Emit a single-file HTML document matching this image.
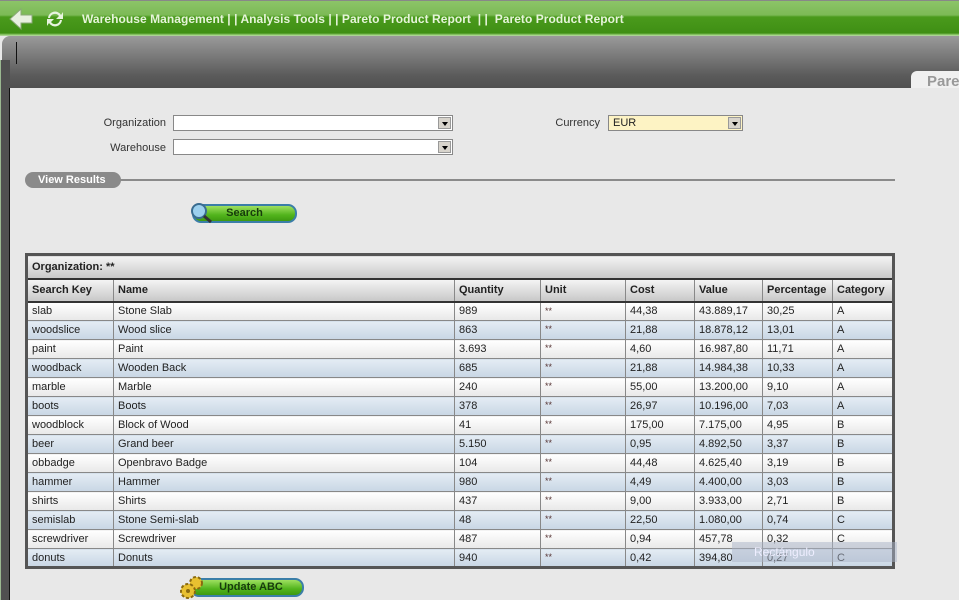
<!DOCTYPE html>
<html><head><meta charset="utf-8"><style>
*{margin:0;padding:0;box-sizing:border-box}
body{width:959px;height:600px;overflow:hidden;background:#e8e8e8;font-family:"Liberation Sans",sans-serif;font-size:11px;color:#222;position:relative}
.top{position:absolute;left:0;top:0;width:959px;height:36px;background:linear-gradient(#8cc468 0,#7cba56 14px,#4a9a1c 16px,#3f8f14 32px,#9ad07a 34px,#e0e0e0 36px);border-top:1px solid #888}
.nav{position:absolute;left:82px;top:12px;color:#e6f4da;font-weight:bold;font-size:12px;white-space:pre;letter-spacing:0.05px}
.gray{position:absolute;left:2px;top:36px;width:957px;height:52px;border-radius:8px 0 0 0;background:linear-gradient(#9a9a9a,#5a5a5a 40px,#505050)}
.side{position:absolute;left:0;top:60px;width:10px;height:540px;background:#505050;border-left:1px solid #9ab890}
.content{position:absolute;left:9px;top:88px;width:950px;height:512px;background:#e8e8e8;border-left:1px solid #111}
.tab{position:absolute;left:911px;top:71px;width:48px;height:17px;background:#f0f0f0;border-radius:6px 0 0 0;color:#999;font-weight:bold;font-size:15px;padding:2px 0 0 16px;overflow:hidden}
.lbl{position:absolute;font-size:11px;color:#333;text-align:right}
.sel{position:absolute;height:16px;background:#fff;border:1px solid #888}
.sel i{position:absolute;right:1px;top:1px;width:13px;height:12px;background:#d8d4cc;border:1px solid #999}
.sel i:after{content:"";position:absolute;left:3px;top:4px;border:3px solid transparent;border-top:4px solid #000}
.vr{position:absolute;left:25px;top:172px;width:96px;height:16px;background:#8a8a8a;border-radius:8px;color:#fff;font-weight:bold;font-size:11px;padding:2px 0 0 13px}
.line{position:absolute;left:118px;top:179px;width:777px;height:2px;background:#8a8a8a}
.btn{position:absolute;height:19px;border-radius:9px;background:linear-gradient(#9ee060,#52b41c 60%,#3d9a10);border:2px solid #3b7ea8;color:#173b0c;font-weight:bold;font-size:11px;text-align:center}
table{position:absolute;left:25px;top:253px;width:870px;border-collapse:collapse;border:3px solid #555;font-size:11px;table-layout:fixed}
td,th{border:1px solid #888;height:19px;padding:0 4px;text-align:left;white-space:nowrap;overflow:hidden}
th{background:linear-gradient(#f4f4f4,#c8c8c8);font-weight:bold;height:23px;font-size:11px;border-bottom:2px solid #333}
tr.o td{background:linear-gradient(#fff,#e8e8e8)}
tr.e td{background:linear-gradient(#e4ecf4,#c8d6e4)}
td.u{font-size:9px;vertical-align:top;padding-top:3px;color:#533}
</style></head><body>
<div class="top"></div>
<svg style="position:absolute;left:8px;top:7px" width="26" height="24"><path d="M2 12 L13 2 L13 8 L24 8 L24 16 L13 16 L13 22 Z" fill="#e8f0e0" stroke="#8aa878"/></svg>
<svg style="position:absolute;left:44px;top:8px" width="22" height="22"><path d="M4 10 A7 7 0 0 1 17 7 L19 4 L19 11 L12 11 L15 8 A5 5 0 0 0 6 10Z M18 12 A7 7 0 0 1 5 15 L3 18 L3 11 L10 11 L7 14 A5 5 0 0 0 16 12Z" fill="#e8f4e0"/></svg>
<div class="nav">Warehouse Management | | Analysis Tools | | Pareto Product Report  | |  Pareto Product Report</div>
<div class="gray"></div>
<div class="side"></div>
<div style="position:absolute;left:16px;top:42px;width:1px;height:22px;background:#111"></div>
<div class="content"></div>
<div class="tab">Pare</div>
<div class="lbl" style="left:60px;top:117px;width:106px">Organization</div>
<div class="sel" style="left:173px;top:115px;width:280px"><i></i></div>
<div class="lbl" style="left:60px;top:142px;width:106px">Warehouse</div>
<div class="sel" style="left:173px;top:139px;width:280px"><i></i></div>
<div class="lbl" style="left:500px;top:117px;width:100px">Currency</div>
<div class="sel" style="left:608px;top:115px;width:135px;background:#fdf3c4;padding:1px 4px">EUR<i></i></div>
<div class="vr">View Results</div>
<div class="line"></div>
<div class="btn" style="left:192px;top:204px;width:105px;padding-top:1px">Search</div>
<svg style="position:absolute;left:189px;top:201px" width="26" height="24"><circle cx="10" cy="10" r="7" fill="#9cd0ee" stroke="#3a6c90" stroke-width="2"/><path d="M15 15 L22 21" stroke="#333" stroke-width="3"/></svg>
<table>
<colgroup><col style="width:87px"><col style="width:341px"><col style="width:86px"><col style="width:85px"><col style="width:69px"><col style="width:68px"><col style="width:70px"><col></colgroup>
<tr><th colspan="8" style="height:24px">Organization: **</th></tr>
<tr><th>Search Key</th><th>Name</th><th>Quantity</th><th>Unit</th><th>Cost</th><th>Value</th><th>Percentage</th><th>Category</th></tr>
<tr class="o"><td>slab</td><td>Stone Slab</td><td>989</td><td class="u">**</td><td>44,38</td><td>43.889,17</td><td>30,25</td><td>A</td></tr>
<tr class="e"><td>woodslice</td><td>Wood slice</td><td>863</td><td class="u">**</td><td>21,88</td><td>18.878,12</td><td>13,01</td><td>A</td></tr>
<tr class="o"><td>paint</td><td>Paint</td><td>3.693</td><td class="u">**</td><td>4,60</td><td>16.987,80</td><td>11,71</td><td>A</td></tr>
<tr class="e"><td>woodback</td><td>Wooden Back</td><td>685</td><td class="u">**</td><td>21,88</td><td>14.984,38</td><td>10,33</td><td>A</td></tr>
<tr class="o"><td>marble</td><td>Marble</td><td>240</td><td class="u">**</td><td>55,00</td><td>13.200,00</td><td>9,10</td><td>A</td></tr>
<tr class="e"><td>boots</td><td>Boots</td><td>378</td><td class="u">**</td><td>26,97</td><td>10.196,00</td><td>7,03</td><td>A</td></tr>
<tr class="o"><td>woodblock</td><td>Block of Wood</td><td>41</td><td class="u">**</td><td>175,00</td><td>7.175,00</td><td>4,95</td><td>B</td></tr>
<tr class="e"><td>beer</td><td>Grand beer</td><td>5.150</td><td class="u">**</td><td>0,95</td><td>4.892,50</td><td>3,37</td><td>B</td></tr>
<tr class="o"><td>obbadge</td><td>Openbravo Badge</td><td>104</td><td class="u">**</td><td>44,48</td><td>4.625,40</td><td>3,19</td><td>B</td></tr>
<tr class="e"><td>hammer</td><td>Hammer</td><td>980</td><td class="u">**</td><td>4,49</td><td>4.400,00</td><td>3,03</td><td>B</td></tr>
<tr class="o"><td>shirts</td><td>Shirts</td><td>437</td><td class="u">**</td><td>9,00</td><td>3.933,00</td><td>2,71</td><td>B</td></tr>
<tr class="e"><td>semislab</td><td>Stone Semi-slab</td><td>48</td><td class="u">**</td><td>22,50</td><td>1.080,00</td><td>0,74</td><td>C</td></tr>
<tr class="o"><td>screwdriver</td><td>Screwdriver</td><td>487</td><td class="u">**</td><td>0,94</td><td>457,78</td><td>0,32</td><td>C</td></tr>
<tr class="e"><td>donuts</td><td>Donuts</td><td>940</td><td class="u">**</td><td>0,42</td><td>394,80</td><td>0,27</td><td>C</td></tr>
</table>
<div style="position:absolute;left:732px;top:542px;width:165px;height:20px;background:rgba(170,180,200,0.5);color:#eef;font-size:12px;padding:3px 0 0 22px">Rectángulo</div>
<div class="btn" style="left:190px;top:578px;width:114px;padding-top:1px;padding-left:8px">Update ABC</div>
<svg style="position:absolute;left:178px;top:574px" width="30" height="26"><circle cx="18" cy="9" r="6" fill="#e8c030" stroke="#8a6a10" stroke-width="2" stroke-dasharray="3 2"/><circle cx="10" cy="17" r="7" fill="#e8c030" stroke="#8a6a10" stroke-width="2" stroke-dasharray="3 2"/><circle cx="10" cy="17" r="2" fill="#8a6a10"/></svg>
</body></html>
